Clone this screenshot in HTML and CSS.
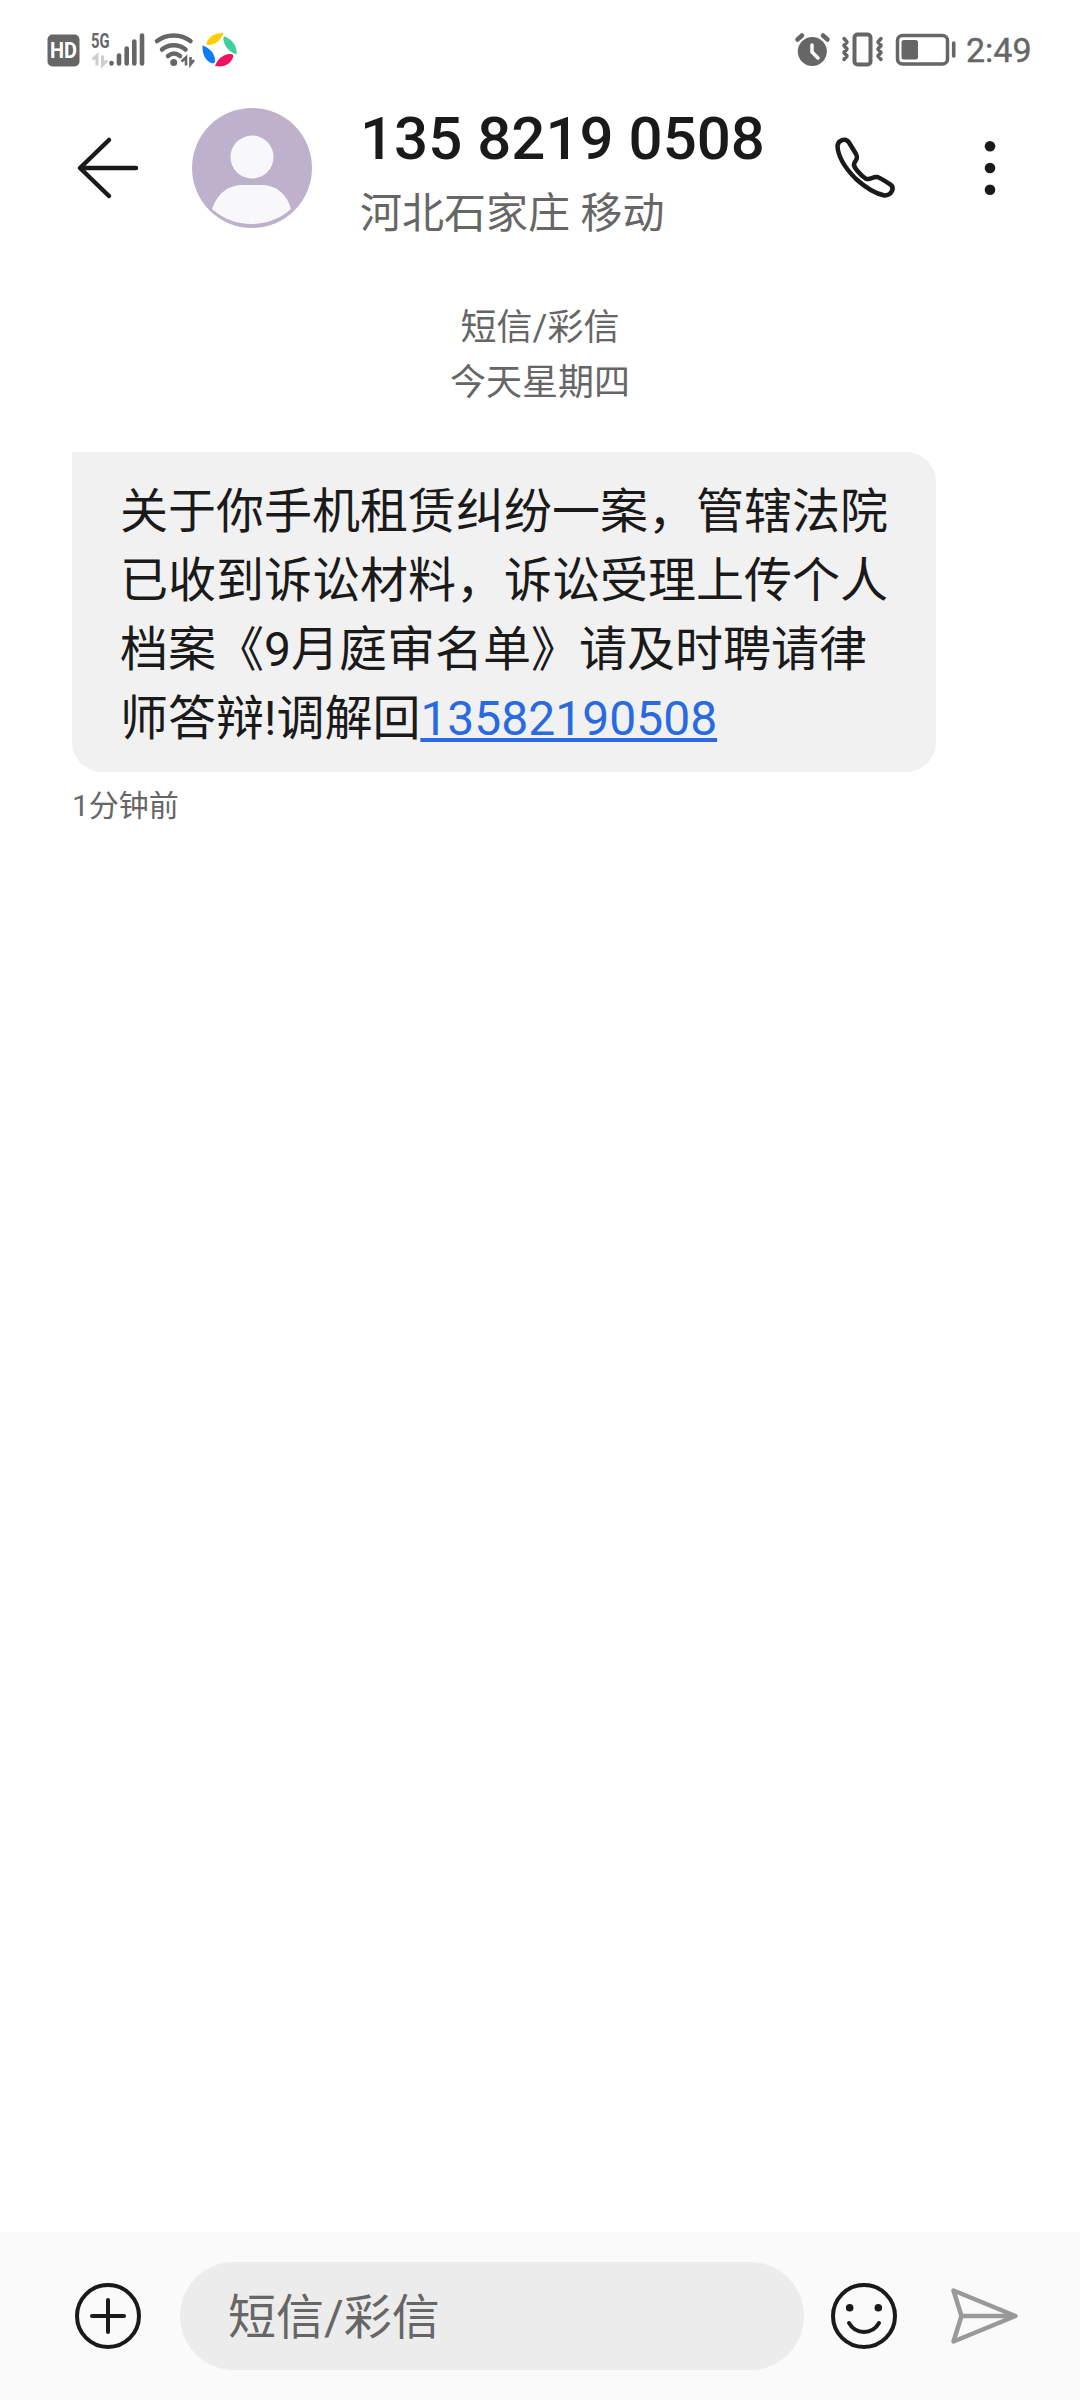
FILE: index.html
```
<!DOCTYPE html>
<html lang="zh-CN">

<head>
    <meta charset="UTF-8">
    <title>短信/彩信</title>
    <link rel="stylesheet" href="styles.css">
</head>

<body>
    <div class="phone">
        <!--状态栏-->
        <div class="status">
            <svg class="status-left" width="196" height="50" viewBox="40 25 196 50">
                <rect x="47.500" y="34.500" width="32" height="32" rx="5" fill="#666" />
                <text class="hd" x="50" y="58" textLength="27" lengthAdjust="spacingAndGlyphs">HD</text>
                <text class="net" x="91" y="47.500" textLength="18.500" lengthAdjust="spacingAndGlyphs">5G</text>
                <path d="M92.500 59.500l4.500-4v10M102.500 55.500v9.500l4.500-4.500" fill="none" stroke="#ccc" stroke-width="3" />
                <g stroke="#666" stroke-width="4.600" stroke-linecap="round">
                    <path d="M111.500 63v.5M119 55.500v8M126.700 48.500v15M134.300 41.500v22M142 35.500v28" />
                </g>
                <g fill="none" stroke="#666" stroke-width="4.500" stroke-linecap="round">
                    <path d="M157 41c9.500-7.500 24-7.500 33.500 0M162 49.500c6.500-5.700 17-5.700 23.500 0M168 56c4-3.300 8-3.300 12 0" />
                </g>
                <circle cx="173.700" cy="62.500" r="3.500" fill="#666" />
                <path d="M181.500 61.500l4.500-4v8M190.500 57v7.500l3.500-4.500" fill="none" stroke="#666" stroke-width="2.600" />
                <path d="M206.500 43c3-7 9-10.500 17-10-2 6-7 11.500-14 12-2 0-3.500-.8-3-2z" fill="#fc0" />
                <path d="M225 36.500c7 3.500 12.500 9 11.500 18-7-2.500-11.500-7.500-13-14-.5-2.500 0-4 1.500-4z" fill="#3fcf9f" />
                <path d="M202.500 45.500c7 2.500 11.500 7 12.500 13.500.5 3-.5 5-3 4.300-6.500-2-10-9.500-9.500-17.800z" fill="#0c7cf5" />
                <path d="M215 66c2.500-7 8-11.500 15-12 3 0 3.800 1.500 2.800 4-3 7-10 9.500-17.800 8z" fill="#ee1260" />
            </svg>
            <svg class="status-right" width="165" height="50" viewBox="792 25 165 50">
                <circle cx="812.300" cy="51.500" r="14.500" fill="#666" />
                <path d="M797.500 39.500l4.500-4M827.500 39.500l-4.500-4" stroke="#666" stroke-width="4.500" stroke-linecap="round" />
                <path d="M812 45v7l6 6" fill="none" stroke="#fff" stroke-width="3.500" stroke-linecap="round" />
                <rect x="854.500" y="34.500" width="16" height="30" rx="3" fill="none" stroke="#666" stroke-width="4" />
                <path d="M844 38.500l3 3.500-3 3.500 3 3.500-3 3.500 3 3.500-3 3.500M881 38.500l-3 3.500 3 3.500-3 3.500 3 3.500-3 3.500 3 3.500" fill="none" stroke="#666" stroke-width="3.500" stroke-linecap="round" stroke-linejoin="round" />
                <rect x="897.500" y="35.500" width="50" height="28.500" rx="5" fill="none" stroke="#666" stroke-width="3.500" />
                <rect x="901.500" y="40" width="16.500" height="19.500" rx="2.500" fill="#666" />
                <path d="M953.700 43v13" stroke="#666" stroke-width="3.600" stroke-linecap="round" />
            </svg>
            <span class="clock">2:49</span>
        </div>

        <!--联系人-->
        <div class="header">
            <svg class="back" width="64" height="64" viewBox="76 136 64 64">
                <path d="M109 140L80 168l29 28M80 168h56" />
            </svg>
            <svg class="avatar" width="120" height="120" viewBox="0 0 120 120">
                <circle cx="60" cy="60" r="60" fill="#beb1cb" />
                <circle cx="60" cy="49" r="21.500" fill="#f8f8fb" />
                <path d="M20 101C26 84 37 77 52 77h16c15 0 26 7 31 24-22 20-57 20-79 0z" fill="#f8f8fb" />
            </svg>
            <div class="contact">
                <div class="number">135 8219 0508</div>
                <div class="place">河北石家庄 移动</div>
            </div>
            <svg class="call" width="72" height="72" viewBox="828 132 72 72">
                <path d="M837.500 146c.5-6 8-8.500 11.500-3.500l7 11.500c2 3.500.5 5.500-1.500 8.500-1.500 3 .5 5.500 3 8.500s5 5.500 8 7.500c5 2.500 7-2.500 12-1.500 4.500 2 9 5 13 7.500 4.500 3.500 1 11-6 11-8-1.500-19-8-28.500-16.500-10-10-18-22.500-18.500-33z" />
            </svg>
            <svg class="more" width="12" height="56" viewBox="0 0 12 56">
                <circle cx="6" cy="6.200" r="5.300" />
                <circle cx="6" cy="28" r="5.300" />
                <circle cx="6" cy="49.800" r="5.300" />
            </svg>
        </div>

        <!--短信内容-->
        <div class="messages">
            <div class="date">短信/彩信<br>今天星期四</div>
            <div class="bubble">关于你手机租赁纠纷一案，管辖法院<br>已收到诉讼材料，诉讼受理上传个人<br>档案《9月庭审名单》请及时聘请律<br>师答辩!调解回<a class="tel" href="tel:13582190508">13582190508</a></div>
            <div class="time">1分钟前</div>
        </div>

        <!--输入栏-->
        <div class="footer">
            <svg class="icon" width="66" height="66" viewBox="0 0 66 66">
                <circle cx="33" cy="33" r="31" />
                <path d="M33 17v32M17 33h32" />
            </svg>
            <div class="input">短信/彩信</div>
            <svg class="icon" width="66" height="66" viewBox="0 0 66 66">
                <circle cx="33" cy="33" r="31" />
                <circle class="eye" cx="18.700" cy="24.700" r="3.800" />
                <circle class="eye" cx="47.300" cy="24.700" r="3.800" />
                <path d="M18 40c7 12 23 12 30 0" />
            </svg>
            <svg class="send" width="68" height="58" viewBox="950 2287 68 58">
                <path d="M953.500 2290.500L1015.500 2316l-62 25.500 8-25.500zM961.500 2316h54" />
            </svg>
        </div>
    </div>
</body>

</html>
```
FILE: styles.css
```
body {
    margin: 0;
    background: #fff;
    font-family: Roboto, "Noto Sans CJK SC", sans-serif;
    color: #1a1a1a;
}

.phone {
    display: flex;
    flex-direction: column;
    width: 1080px;
    height: 2400px;
}

.status {
    display: flex;
    align-items: center;
    box-sizing: border-box;
    height: 100px;
    padding: 0 48px 0 40px;
}

.status-left {
    overflow: visible;
}

.status-right {
    margin-left: auto;
}

.hd {
    font-size: 22px;
    font-weight: bold;
    fill: #fff;
}

.net {
    font-size: 20px;
    font-weight: bold;
    fill: #666;
}

.clock {
    width: 66px;
    margin-left: 9px;
    font-size: 34px;
    line-height: 50px;
    color: #666;
    -webkit-text-stroke: 0.4px #666;
}

.header {
    display: flex;
    align-items: center;
    height: 136px;
    padding: 0 84px 0 76px;
}

.back {
    margin-right: 52px;
    fill: none;
    stroke: #1a1a1a;
    stroke-width: 4.500;
    stroke-linecap: round;
    stroke-linejoin: round;
}

.contact {
    margin-left: 48px;
    padding-top: 14px;
}

.number {
    font-size: 60px;
    font-weight: 500;
    line-height: 78px;
}

.place {
    font-size: 42px;
    line-height: 72px;
    color: #666;
}

.call {
    margin-left: auto;
    fill: none;
    stroke: #1a1a1a;
    stroke-width: 4.500;
    stroke-linejoin: round;
}

.more {
    margin-left: 84px;
    fill: #1a1a1a;
}

.messages {
    flex: 1;
    padding: 65px 72px 0;
}

.date {
    font-size: 36px;
    line-height: 55px;
    text-align: center;
    color: #666;
}

.bubble {
    box-sizing: border-box;
    width: 864px;
    height: 320px;
    margin-top: 41px;
    padding: 25px 48px 19px;
    border-radius: 0 30px 30px 30px;
    background: #f1f1f1;
    font-size: 48px;
    line-height: 69px;
    white-space: nowrap;
}

.tel {
    color: #2a6ae0;
}

.time {
    margin-top: 12px;
    font-size: 30px;
    line-height: 44px;
    color: #666;
}

.footer {
    display: flex;
    align-items: center;
    height: 168px;
    padding: 0 62px 0 75px;
    background: #fafafa;
}

.icon {
    fill: none;
    stroke: #1a1a1a;
    stroke-width: 4;
    stroke-linecap: round;
}

.icon .eye {
    fill: #1a1a1a;
    stroke: none;
}

.input {
    box-sizing: border-box;
    width: 624px;
    height: 108px;
    margin: 0 27px 0 39px;
    padding-left: 48px;
    border-radius: 54px;
    background: #ececec;
    font-size: 48px;
    line-height: 112px;
    color: #666;
}

.send {
    margin-left: auto;
    fill: none;
    stroke: #999;
    stroke-width: 4.500;
    stroke-linejoin: round;
}
```
